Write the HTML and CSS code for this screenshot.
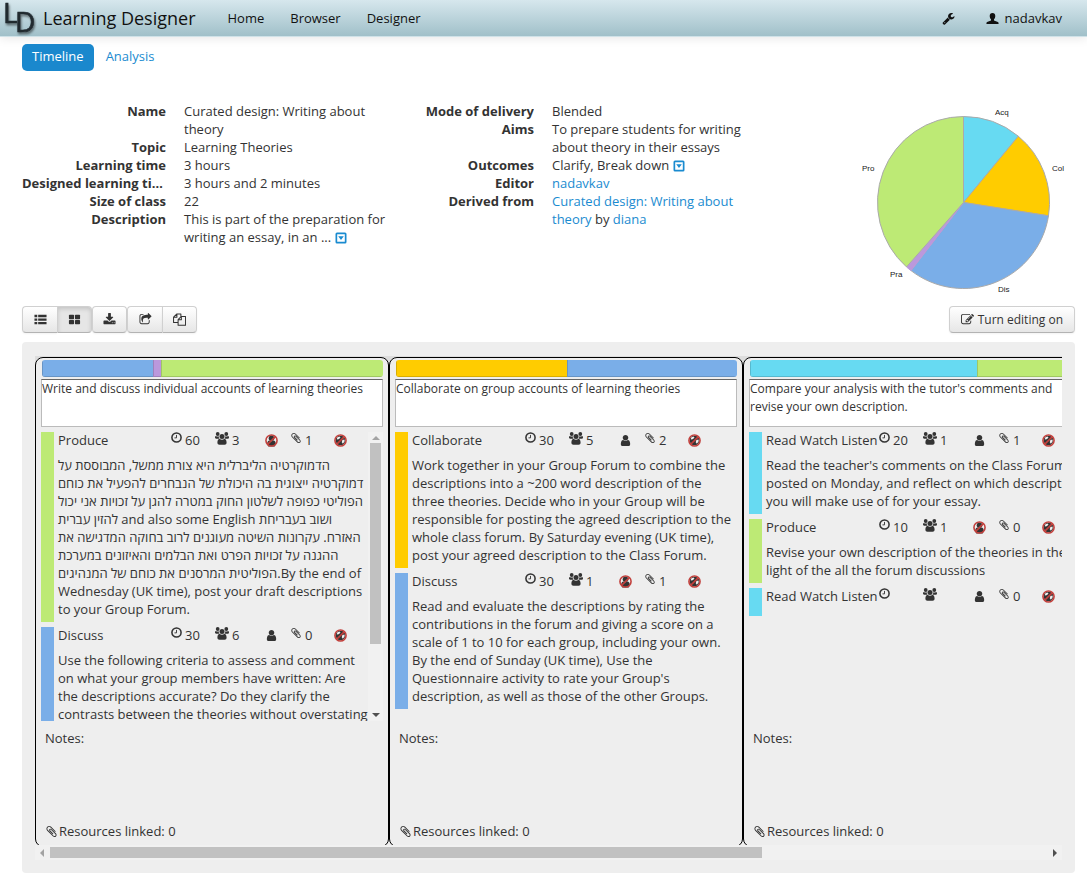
FILE: index.html
```html
<!DOCTYPE html>
<html lang="en">
<head>
<meta charset="utf-8">
<title>Learning Designer</title>
<link rel="stylesheet" href="styles.css">
</head>
<body>
<svg class="sprite" aria-hidden="true">
  <symbol id="wrench" viewBox="0 0 1792 1792"><path d="M448 1472q0-26-19-45t-45-19-45 19-19 45 19 45 45 19 45-19 19-45zm644-420l-682 682q-37 37-90 37-52 0-91-37l-106-108q-38-36-38-90 0-53 38-91l681-681q39 98 114.5 173.5t173.5 114.5zm634-435q0 39-23 106-47 134-164.5 217.5t-258.5 83.5q-185 0-316.5-131.5t-131.5-316.5 131.5-316.5 316.5-131.5q58 0 121.5 16.5t107.5 46.5q16 11 16 28t-16 28l-293 169v224l193 107q5-3 79-48.5t135.5-81 70.5-35.5q15 0 23.5 10t8.5 25z"/></symbol>
  <symbol id="profile" viewBox="0 0 14 14"><path d="M7 1c2 0 3 1.300 3 3.200 0 1.500-.6 2.900-1.400 3.600v1.300l4.200 1.700c.5.200.7.600.7 1V13H.5v-1.200c0-.4.200-.8.7-1l4.200-1.700V7.800C4.600 7.100 4 5.700 4 4.200 4 2.300 5 1 7 1z"/></symbol>
  <symbol id="person" viewBox="0 0 1792 1792"><path d="M1536 1399q0 109-62.500 187t-150.500 78h-854q-88 0-150.500-78t-62.500-187q0-85 8.500-160.500t31.500-152 58.500-131 94-89 134.500-34.500q131 128 313 128t313-128q76 0 134.500 34.500t94 89 58.500 131 31.500 152 8.500 160.500zm-256-887q0 159-112.500 271.500t-271.500 112.500-271.500-112.500-112.500-271.500 112.500-271.500 271.500-112.500 271.500 112.500 112.500 271.500z"/></symbol>
  <symbol id="list" viewBox="0 0 14 14"><path d="M.5 2h3v2.500h-3zM4.500 2h9v2.500h-9zM.5 5.800h3v2.500h-3zM4.500 5.800h9v2.500h-9zM.5 9.600h3v2.500h-3zM4.500 9.600h9v2.500h-9z"/></symbol>
  <symbol id="tiles" viewBox="0 0 14 14"><rect x="1" y="2" width="5.500" height="4.600" rx=".8"/><rect x="7.500" y="2" width="5.500" height="4.600" rx=".8"/><rect x="1" y="7.600" width="5.500" height="4.600" rx=".8"/><rect x="7.500" y="7.600" width="5.500" height="4.600" rx=".8"/></symbol>
  <symbol id="download" viewBox="0 0 1792 1792"><path d="M1344 1344q0-26-19-45t-45-19-45 19-19 45 19 45 45 19 45-19 19-45zm256 0q0-26-19-45t-45-19-45 19-19 45 19 45 45 19 45-19 19-45zm128-224v320q0 40-28 68t-68 28h-1472q-40 0-68-28t-28-68v-320q0-40 28-68t68-28h465l135 136q58 56 136 56t136-56l136-136h464q40 0 68 28t28 68zm-325-569q17 41-14 70l-448 448q-18 19-45 19t-45-19l-448-448q-31-29-14-70 17-39 59-39h256v-448q0-26 19-45t45-19h256q26 0 45 19t19 45v448h256q42 0 59 39z"/></symbol>
  <symbol id="share" viewBox="0 0 1792 1792"><path d="M1472 989v259q0 119-84.500 203.500t-203.500 84.500h-832q-119 0-203.500-84.500t-84.500-203.500v-832q0-119 84.500-203.500t203.500-84.500h255q13 0 22.500 9.500t9.500 22.500q0 27-26 32-77 26-133 60-10 4-16 4h-112q-66 0-113 47t-47 113v832q0 66 47 113t113 47h832q66 0 113-47t47-113v-214q0-19 18-29 28-13 54-37 16-16 35-8 21 9 21 29zm237-496l-384 384q-18 19-45 19-12 0-25-5-39-17-39-59v-192h-160q-323 0-438 131-119 137-74 473 3 23-20 34-8 2-12 2-16 0-26-13-10-14-21-31t-39.500-68.500-49.500-99.500-38.500-114-17.500-122q0-49 3.500-91t14-90 28-88 47-81.500 68.500-74 94.500-61.500 124.500-48.500 159.500-30.500 196.500-11h160v-192q0-42 39-59 13-5 25-5 26 0 45 19l384 384q19 19 19 45t-19 45z"/></symbol>
  <symbol id="copy" viewBox="0 0 14 14"><path fill="none" stroke="currentColor" stroke-width="1.100" stroke-linejoin="round" d="M5.500 10.200h-4.900V4.500L4.200 1H8.500v3M4.200 1v3.500H.6M9 3.700h4.500v9.500H5.500V7.200zM9 3.700v3.500H5.500"/></symbol>
  <symbol id="edit" viewBox="0 0 1792 1792"><path d="M888 1184l116-116-152-152-116 116v56h96v96h56zm440-720q-16-16-33 1l-350 350q-17 17-1 33t33-1l350-350q17-17 1-33zm80 594v190q0 119-84.500 203.500t-203.500 84.500h-832q-119 0-203.500-84.500t-84.500-203.500v-832q0-119 84.500-203.500t203.500-84.500h832q63 0 117 25 15 7 18 23 3 17-9 29l-49 49q-14 14-32 8-23-6-45-6h-832q-66 0-113 47t-47 113v832q0 66 47 113t113 47h832q66 0 113-47t47-113v-126q0-13 9-22l64-64q15-15 35-7t20 29zm-96-738l288 288-672 672h-288v-288zm444 132l-92 92-288-288 92-92q28-28 68-28t68 28l152 152q28 28 28 68t-28 68z"/></symbol>
  <symbol id="clip" viewBox="0 0 1792 1792"><path d="M1596 1385q0 117-79 196t-196 79q-135 0-235-100l-777-776q-113-115-113-271 0-159 110-270t269-111q158 0 273 113l605 606q10 10 10 22 0 16-30.500 46.500t-46.500 30.500q-13 0-23-10l-606-607q-79-77-181-77-106 0-179 75t-73 181q0 105 76 181l776 777q63 63 145 63 64 0 106-42t42-106q0-82-63-145l-581-581q-26-24-60-24-29 0-48 19t-19 48q0 32 25 59l410 410q10 10 10 22 0 16-31 47t-47 31q-12 0-22-10l-410-410q-63-61-63-149 0-82 57-139t139-57q88 0 149 63l581 581q100 98 100 235z"/></symbol>
  <symbol id="clock" viewBox="0 0 12 12"><circle cx="6" cy="6" r="5" fill="none" stroke="currentColor" stroke-width="1.700"/><path d="M6 3.200v3.200H3.800" fill="none" stroke="currentColor" stroke-width="1"/></symbol>
  <symbol id="group" viewBox="0 0 14 13"><circle cx="2.700" cy="2" r="1.900"/><circle cx="11.300" cy="2" r="1.900"/><path d="M.9 4c1 .6 1.900.7 2.900.3-.2 1 0 1.700.6 2.400H1.200C.4 6.700 0 6.300 0 5.500 0 4.900.2 4 .9 4zM13.100 4c-1 .6-1.900.7-2.900.3.2 1 0 1.700-.6 2.400h3.200c.8 0 1.200-.4 1.200-1.200 0-.6-.2-1.500-.9-1.500z"/><circle cx="7" cy="4.400" r="2.500"/><path d="M4.500 6.800c1.600 1.300 3.400 1.300 5 0 1.400.3 2.100 1.800 2.100 3.900 0 1.200-.8 2-2 2H4.400c-1.200 0-2-.8-2-2 0-2.100.7-3.600 2.100-3.900z"/></symbol>
  <symbol id="ban" viewBox="0 0 14 14"><circle cx="7" cy="7" r="6" fill="none" stroke="#c2403c" stroke-width="1.700"/><path d="M11.200 2.800l-8.400 8.400" stroke="#c2403c" stroke-width="1.700"/></symbol>
  <symbol id="globe" viewBox="0 0 14 14"><circle cx="7" cy="7" r="5.200" fill="#333"/><path d="M3.600 3.400l2.400-.8 1 1.400-2 1.700-2 .3zM9 6.500l2.300-.6.2 2-1.900 2.600-1.300-1.600z" fill="#eee"/><use href="#ban"/></symbol>
  <symbol id="noperson" viewBox="0 0 14 14"><circle cx="7" cy="4.500" r="3"/><path d="M2.300 11c0-2.500 1-4 2.700-4 1.400 1 2.700 1 4 0 1.700 0 2.700 1.500 2.700 4L10.500 13.500h-7z"/><use href="#ban"/></symbol>
  <symbol id="more" viewBox="0 0 12 12"><path fill-rule="evenodd" d="M2 .5h8A1.500 1.500 0 0 1 11.500 2v8a1.500 1.500 0 0 1-1.500 1.500H2A1.500 1.500 0 0 1 .5 10V2A1.500 1.500 0 0 1 2 .5zM2.200 2.200v7.600h7.600V2.200zM3.200 4.300h5.600L6 8z"/></symbol>
</svg>

<header class="topbar">
  <a class="brand" href="#">
    <svg class="logo" width="38" height="36" viewBox="0 0 38 36" aria-hidden="true"><text x="3" y="23">L</text><text x="15" y="32">D</text></svg>
    <span>Learning Designer</span>
  </a>
  <nav class="nav"><a href="#">Home</a><a href="#">Browser</a><a href="#">Designer</a></nav>
  <nav class="nav user"><a href="#" aria-label="Tools"><svg class="icon"><use href="#wrench"/></svg></a><a href="#"><svg class="icon"><use href="#profile"/></svg>nadavkav</a></nav>
</header>

<main class="page">
  <nav class="tabs"><a class="tab active" href="#">Timeline</a><a class="tab" href="#">Analysis</a></nav>

  <section class="summary">
    <dl class="facts">
      <dt>Name</dt><dd>Curated design: Writing about theory</dd>
      <dt>Topic</dt><dd>Learning Theories</dd>
      <dt>Learning time</dt><dd>3 hours</dd>
      <dt>Designed learning time</dt><dd>3 hours and 2 minutes</dd>
      <dt>Size of class</dt><dd>22</dd>
      <dt>Description</dt><dd>This is part of the preparation for writing an essay, in an ... <a href="#" aria-label="Show more"><svg class="more"><use href="#more"/></svg></a></dd>
    </dl>
    <dl class="facts">
      <dt>Mode of delivery</dt><dd>Blended</dd>
      <dt>Aims</dt><dd>To prepare students for writing about theory in their essays</dd>
      <dt>Outcomes</dt><dd>Clarify, Break down <a href="#" aria-label="Show more"><svg class="more"><use href="#more"/></svg></a></dd>
      <dt>Editor</dt><dd><a href="#">nadavkav</a></dd>
      <dt>Derived from</dt><dd><a href="#">Curated design: Writing about theory</a> by <a href="#">diana</a></dd>
    </dl>
    <svg class="pie" width="235" height="210" viewBox="0 0 235 210" role="img" aria-label="Learning types">
      <g stroke="#aaa" stroke-width="1">
        <path fill="#67daf2" d="M123.500 107.500V21.500A86 86 0 0 1 178.300 41.200z"/>
        <path fill="#fc0" d="M123.500 107.500L178.300 41.200A86 86 0 0 1 208.500 120.800z"/>
        <path fill="#7aaee8" d="M123.500 107.500L208.500 120.800A86 86 0 0 1 71 175.600z"/>
        <path fill="#bb98dc" stroke="#bb98dc" d="M123.500 107.500L71 175.600A86 86 0 0 1 66.500 171.900z"/>
        <path fill="#bdea75" d="M123.500 107.500L66.500 171.900A86 86 0 0 1 123.500 21.500z"/>
      </g>
      <text x="155" y="20">Acq</text><text x="212" y="76">Col</text><text x="22" y="76">Pro</text><text x="50" y="182">Pra</text><text x="158" y="197">Dis</text>
    </svg>
  </section>

  <div class="toolbar">
    <div class="group">
      <button class="btn" aria-label="List view"><svg class="icon"><use href="#list"/></svg></button>
      <button class="btn pressed" aria-label="Tile view"><svg class="icon"><use href="#tiles"/></svg></button>
    </div>
    <button class="btn" aria-label="Download"><svg class="icon"><use href="#download"/></svg></button>
    <div class="group">
      <button class="btn" aria-label="Share"><svg class="icon"><use href="#share"/></svg></button>
      <button class="btn" aria-label="Copy"><svg class="icon"><use href="#copy"/></svg></button>
    </div>
    <button class="btn wide"><svg class="icon"><use href="#edit"/></svg>Turn editing on</button>
  </div>

  <section class="board">
    <div class="cards">
      <article class="card">
        <div class="mix"><span class="dis" style="width:32.6%"></span><span class="pra" style="width:2.2%"></span><span class="pro" style="width:65.2%"></span></div>
        <textarea class="title" aria-label="Session title" readonly>Write and discuss individual accounts of learning theories</textarea>
        <div class="pane">
          <div class="acts">
            <div class="act pro">
              <div class="meta"><b>Produce</b><span><svg class="clock"><use href="#clock"/></svg>60</span><span><svg class="people"><use href="#group"/></svg>3</span><svg class="mark"><use href="#noperson"/></svg><span><svg class="clip"><use href="#clip"/></svg>1</span><svg class="mark"><use href="#globe"/></svg></div>
              <p>הדמוקרטיה הליברלית היא צורת ממשל, המבוססת על<br>דמוקרטיה ייצוגית בה היכולת של הנבחרים להפעיל את כוחם<br>הפוליטי כפופה לשלטון החוק במטרה להגן על זכויות אני יכול<br>להזין עברית and also some English ושוב בעבריחת<br>האזרח. עקרונות השיטה מעוגנים לרוב בחוקה המדגישה את<br>ההגנה על זכויות הפרט ואת הבלמים והאיזונים במערכת<br>הפוליטית המרסנים את כוחם של המנהיגים.By the end of Wednesday (UK time), post your draft descriptions to your Group Forum.</p>
            </div>
            <div class="act dis">
              <div class="meta"><b>Discuss</b><span><svg class="clock"><use href="#clock"/></svg>30</span><span><svg class="people"><use href="#group"/></svg>6</span><svg class="mark"><use href="#person"/></svg><span><svg class="clip"><use href="#clip"/></svg>0</span><svg class="mark"><use href="#globe"/></svg></div>
              <p>Use the following criteria to assess and comment on what your group members have written: Are the descriptions accurate? Do they clarify the contrasts between the theories without overstating</p>
            </div>
          </div>
          <div class="vbar" aria-hidden="true"><i class="arrow up"></i><i class="thumb"></i><i class="arrow down"></i></div>
        </div>
        <p class="notes">Notes:</p>
        <p class="linked"><svg class="icon"><use href="#clip"/></svg>Resources linked: 0</p>
      </article>

      <article class="card">
        <div class="mix"><span class="col" style="width:50%"></span><span class="dis" style="width:50%"></span></div>
        <textarea class="title" aria-label="Session title" readonly>Collaborate on group accounts of learning theories</textarea>
        <div class="pane">
          <div class="acts">
            <div class="act col">
              <div class="meta"><b>Collaborate</b><span><svg class="clock"><use href="#clock"/></svg>30</span><span><svg class="people"><use href="#group"/></svg>5</span><svg class="mark"><use href="#person"/></svg><span><svg class="clip"><use href="#clip"/></svg>2</span><svg class="mark"><use href="#globe"/></svg></div>
              <p>Work together in your Group Forum to combine the descriptions into a ~200 word description of the three theories. Decide who in your Group will be responsible for posting the agreed description to the whole class forum. By Saturday evening (UK time), post your agreed description to the Class Forum.</p>
            </div>
            <div class="act dis">
              <div class="meta"><b>Discuss</b><span><svg class="clock"><use href="#clock"/></svg>30</span><span><svg class="people"><use href="#group"/></svg>1</span><svg class="mark"><use href="#noperson"/></svg><span><svg class="clip"><use href="#clip"/></svg>1</span><svg class="mark"><use href="#globe"/></svg></div>
              <p>Read and evaluate the descriptions by rating the contributions in the forum and giving a score on a scale of 1 to 10 for each group, including your own. By the end of Sunday (UK time), Use the Questionnaire activity to rate your Group's description, as well as those of the other Groups.</p>
            </div>
          </div>
        </div>
        <p class="notes">Notes:</p>
        <p class="linked"><svg class="icon"><use href="#clip"/></svg>Resources linked: 0</p>
      </article>

      <article class="card">
        <div class="mix"><span class="acq" style="width:66.7%"></span><span class="pro" style="width:33.3%"></span></div>
        <textarea class="title" aria-label="Session title" readonly>Compare your analysis with the tutor's comments and
revise your own description.</textarea>
        <div class="pane">
          <div class="acts">
            <div class="act acq">
              <div class="meta"><b>Read Watch Listen</b><span><svg class="clock"><use href="#clock"/></svg>20</span><span><svg class="people"><use href="#group"/></svg>1</span><svg class="mark"><use href="#person"/></svg><span><svg class="clip"><use href="#clip"/></svg>1</span><svg class="mark"><use href="#globe"/></svg></div>
              <p>Read the teacher's comments on the Class Forum, posted on Monday, and reflect on which descriptions you will make use of for your essay.</p>
            </div>
            <div class="act pro">
              <div class="meta"><b>Produce</b><span><svg class="clock"><use href="#clock"/></svg>10</span><span><svg class="people"><use href="#group"/></svg>1</span><svg class="mark"><use href="#noperson"/></svg><span><svg class="clip"><use href="#clip"/></svg>0</span><svg class="mark"><use href="#globe"/></svg></div>
              <p>Revise your own description of the theories in the light of the all the forum discussions</p>
            </div>
            <div class="act acq">
              <div class="meta"><b>Read Watch Listen</b><span><svg class="clock"><use href="#clock"/></svg></span><span><svg class="people"><use href="#group"/></svg></span><svg class="mark"><use href="#person"/></svg><span><svg class="clip"><use href="#clip"/></svg>0</span><svg class="mark"><use href="#globe"/></svg></div>
            </div>
          </div>
        </div>
        <p class="notes">Notes:</p>
        <p class="linked"><svg class="icon"><use href="#clip"/></svg>Resources linked: 0</p>
      </article>
    </div>
    <div class="hbar" aria-hidden="true"><i class="arrow left"></i><span class="rail"><i class="thumb"></i></span><i class="arrow right"></i></div>
  </section>
</main>
</body>
</html>
```
FILE: styles.css
```css
* { box-sizing: border-box; }

body {
  margin: 0;
  background: #fff;
  color: #333;
  font: 13px/18px "Open Sans", "Liberation Sans", sans-serif;
}

a { color: #1a8bd0; text-decoration: none; }
p, dl, dd { margin: 0; }
svg { fill: currentColor; flex: none; }

.sprite { display: none; }
.icon { width: 13px; height: 13px; }

/* Top bar */
.topbar {
  display: flex;
  align-items: center;
  height: 37px;
  padding-right: 25px;
  border-bottom: 1px solid #cfe2e8;
  background: linear-gradient(#d6e7ed, #a0c0c9);
  box-shadow: 0 1px 10px rgba(0, 0, 0, .1);
}
.topbar a { color: #111; }
.brand { display: flex; align-items: center; gap: 5px; font-size: 18px; }
.logo { filter: drop-shadow(1px 2px 1px rgba(0, 0, 0, .5)); }
.logo text { font-size: 28px; fill: #222b30; stroke: #222b30; stroke-width: .6; }
.nav { display: flex; gap: 26px; margin-left: 32px; }
.nav a { display: flex; align-items: center; gap: 6px; }
.user { gap: 31px; margin-left: auto; }

/* Page */
.page { padding: 7px 12px 12px 22px; }

.tabs { display: flex; gap: 2px; }
.tab { padding: 3px 10px 6px; border-radius: 5px; }
.tab.active { background: #1a88cd; color: #fff; }

.summary {
  display: grid;
  grid-template-columns: 368px 368px 1fr;
  margin-top: 24px;
}
.facts {
  display: grid;
  grid-template-columns: 144px 1fr;
  column-gap: 18px;
  align-content: start;
  padding: 7px 4px 0 0;
}
.facts dt {
  overflow: hidden;
  font-weight: 700;
  text-align: right;
  text-overflow: ellipsis;
  white-space: nowrap;
}
.more { width: 12px; height: 12px; vertical-align: -2px; }
.pie { margin-left: 82px; }
.pie text { font: 8px "Liberation Sans", sans-serif; fill: #222; }

/* Buttons */
.toolbar { display: flex; margin-top: 1px; }
.group { display: flex; }
.btn {
  display: flex;
  align-items: center;
  justify-content: center;
  gap: 4px;
  width: 35px;
  height: 27px;
  padding: 0;
  border: 1px solid #d0d0d0;
  border-bottom-color: #b3b3b3;
  border-radius: 4px;
  background: linear-gradient(#fff, #e6e6e6);
  box-shadow: 0 1px 2px rgba(0, 0, 0, .05);
  color: #333;
  font: inherit;
  font-size: 12px;
}
.group .btn:first-child { border-radius: 4px 0 0 4px; border-right: 0; }
.group .btn:last-child { border-radius: 0 4px 4px 0; }
.btn.pressed { background: #e6e6e6; box-shadow: inset 0 2px 4px rgba(0, 0, 0, .15); }
.btn.wide { width: auto; margin-left: auto; padding: 0 11px; }

/* Board */
.board {
  margin-top: 9px;
  padding: 14px 13px 13px;
  border-radius: 4px;
  background: #eee;
}
.cards {
  display: flex;
  height: 489px;
  padding-top: 1px;
  overflow: hidden;
  background: linear-gradient(#ddd 12px, #eee 12px);
}
.card {
  display: flex;
  flex: 0 0 354px;
  flex-direction: column;
  height: 490px;
  padding: 2px 5px 0;
  border: 1px solid #000;
  border-radius: 8px;
  background: #eee;
}
.mix {
  display: flex;
  height: 17px;
  margin-left: 1px;
  overflow: hidden;
  border-radius: 3px;
}
.mix span { box-shadow: inset 1px -1px 0 rgba(0, 0, 0, .15); }
.title {
  height: 48px;
  margin: 2px 0 5px;
  padding: 0;
  overflow: hidden;
  border: 1px solid #bbb;
  border-top-color: #666;
  background: #fff;
  color: inherit;
  font: inherit;
  font-size: 12px;
  resize: none;
}

.acq { --type: #67daf2; }
.col { --type: #fc0; }
.dis { --type: #7aaee8; }
.pra { --type: #bb98dc; }
.pro { --type: #bdea75; }
.mix span { background: var(--type); }

.pane { display: flex; height: 289px; overflow: hidden; }
.acts { display: flex; flex: 1; flex-direction: column; gap: 5px; min-width: 0; }
.acts:last-child { padding-right: 2px; }
.act { flex: none; padding-bottom: 4px; border-left: 13px solid var(--type); }
.act p { padding-left: 4px; }
.meta {
  display: grid;
  grid-template-columns: 113px 44px 50px 25px 44px 14px;
  height: 24px;
  padding-left: 4px;
  line-height: 16px;
}
.meta b { font-weight: 400; white-space: nowrap; }
.meta span { display: flex; gap: 3px; }
.clock { width: 11px; height: 11px; }
.clip { width: 12px; height: 12px; }
.people { width: 14px; height: 13px; }
.mark { width: 13px; height: 13px; margin-top: 2px; }

.notes { margin: 8px 0 75px; padding-left: 4px; }
.linked { display: flex; align-items: center; gap: 1px; padding-left: 4px; }

/* Scrollbars */
.vbar, .hbar { display: flex; align-items: center; background: #f1f1f1; }
.vbar { flex: none; flex-direction: column; width: 15px; padding: 4px 0; }
.hbar { height: 15px; padding: 0 5px; }
.thumb { display: block; background: #c1c1c1; }
.vbar .thumb { width: 11px; height: 201px; margin: 3px 0 auto; }
.rail { flex: 1; margin: 0 6px; }
.hbar .thumb { width: 71.4%; height: 11px; }
.arrow { border: 4px solid transparent; }
.arrow.up { border-top: 0; border-bottom-color: #a3a3a3; }
.arrow.down { border-bottom: 0; border-top-color: #505050; }
.arrow.left { border-left: 0; border-right-color: #a3a3a3; }
.arrow.right { border-right: 0; border-left-color: #505050; }
```
